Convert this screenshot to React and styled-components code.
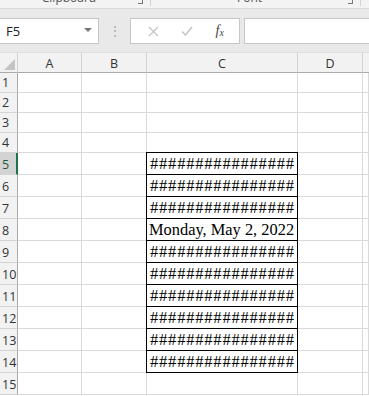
import React from "react";
import styled, { createGlobalStyle } from "styled-components";

const GlobalStyle = createGlobalStyle`
  body {
    margin: 0;
    background: #ffffff;
    overflow: hidden;
    font-family: "Open Sans", "Noto Sans", sans-serif;
  }
`;

const columns = [
  { name: "A", width: 64 },
  { name: "B", width: 65 },
  { name: "C", width: 151 },
  { name: "D", width: 65 },
];

const rows = [];
for (let i = 1; i <= 15; i++) {
  let value = null;
  if (i >= 5 && i <= 14) value = i === 8 ? "Monday, May 2, 2022" : "################";
  rows.push({ num: i, height: i <= 4 ? 20 : 22, value });
}

function App() {
  return (
    <>
      <GlobalStyle />
      <Window>
        <Ribbon>
          <RibbonGroup $width={150}>
            <GroupLabel>Clipboard</GroupLabel>
            <Launcher />
          </RibbonGroup>
          <RibbonGroup $width={209}>
            <GroupLabel>Font</GroupLabel>
            <Launcher />
          </RibbonGroup>
        </Ribbon>

        <FormulaBar>
          <NameBox>
            <span>F5</span>
            <Caret />
          </NameBox>
          <Grip>⋮</Grip>
          <FxButtons>
            <svg width="11" height="11" viewBox="0 0 11 11">
              <path d="M1 1 L10 10 M10 1 L1 10" stroke="#c4c4c4" strokeWidth="1.3" fill="none" />
            </svg>
            <svg width="12" height="10" viewBox="0 0 12 10">
              <path d="M1 5.5 L4.5 9 L11 1" stroke="#c4c4c4" strokeWidth="1.5" fill="none" />
            </svg>
            <FxText>
              f<sub>x</sub>
            </FxText>
          </FxButtons>
          <FormulaInput />
        </FormulaBar>

        <Sheet>
          <Corner>
            <CornerMark />
          </Corner>
          {columns.map(c => (
            <ColHeader key={c.name}>{c.name}</ColHeader>
          ))}
          <ColHeader $last />

          {rows.map(r => (
            <React.Fragment key={`row_${r.num}`}>
              <RowHeader $active={r.num === 5} $height={r.height}>
                {r.num}
              </RowHeader>
              <Cell />
              <Cell />
              <Cell $boxed={!!r.value} $first={r.num === 5}>
                {r.value && <CellText $hash={r.value.startsWith("#")}>{r.value}</CellText>}
              </Cell>
              <Cell />
              <Cell />
            </React.Fragment>
          ))}
        </Sheet>
      </Window>
    </>
  );
}

const Window = styled.div`
  width: 369px;
  height: 396px;
  overflow: hidden;
  background: #ffffff;
`;

const Ribbon = styled.div`
  height: 8px;
  display: flex;
  background: #f3f3f3;
  border-bottom: 1px solid #d8d8d8;
  overflow: hidden;
`;

const RibbonGroup = styled.div`
  width: ${props => props.$width}px;
  flex: none;
  position: relative;
  display: flex;
  justify-content: center;
  border-right: 1px solid #d2d2d2;
  height: 6px;
`;

const GroupLabel = styled.div`
  font-family: "Open Sans", "Noto Sans", sans-serif;
  font-size: 12px;
  line-height: 12px;
  color: #555;
  margin-top: -8px;
  margin-left: -12px;
`;

const Launcher = styled.div`
  position: absolute;
  right: 7px;
  top: 0;
  width: 4px;
  height: 3px;
  border-right: 1px solid #777;
  border-bottom: 1px solid #777;
`;

const FormulaBar = styled.div`
  height: 43px;
  box-sizing: border-box;
  padding: 9px 0 8px;
  display: flex;
  background: #e9e9e9;
`;

const Box = styled.div`
  box-sizing: border-box;
  height: 26px;
  background: #ffffff;
  border: 1px solid #c6c6c6;
`;

const NameBox = styled(Box)`
  width: 100px;
  margin-left: -1px;
  display: flex;
  align-items: center;
  justify-content: space-between;
  padding: 0 6px 0 6px;
  font-size: 13px;
  color: #222;
`;

const Caret = styled.div`
  width: 0;
  height: 0;
  border-left: 4px solid transparent;
  border-right: 4px solid transparent;
  border-top: 4px solid #777;
  margin-top: -2px;
`;

const Grip = styled.div`
  width: 31px;
  flex: none;
  text-align: center;
  color: #b0b0b0;
  font-size: 14px;
  line-height: 26px;
`;

const FxButtons = styled(Box)`
  width: 110px;
  display: flex;
  align-items: center;
  justify-content: space-around;
  padding: 0 4px 0 6px;
`;

const FxText = styled.span`
  font-family: "Liberation Serif", "DejaVu Serif", serif;
  font-style: italic;
  font-size: 14px;
  color: #444;
  sub {
    font-size: 10px;
    vertical-align: -1px;
  }
`;

const FormulaInput = styled(Box)`
  flex: 1;
  margin-left: 4px;
  margin-right: -2px;
`;

const Sheet = styled.div`
  display: grid;
  grid-template-columns: 18px 64px 65px 151px 65px 1fr;
  grid-auto-rows: auto;
  background: #ffffff;
`;

const Corner = styled.div`
  height: 21px;
  box-sizing: border-box;
  background: #f2f2f2;
  border-right: 1px solid #d4d4d4;
  border-bottom: 1px solid #ababab;
  position: relative;
  border-top: 1px solid #dedede;
`;

const CornerMark = styled.div`
  position: absolute;
  right: 2px;
  bottom: 2px;
  width: 0;
  height: 0;
  border-left: 11px solid transparent;
  border-bottom: 11px solid #c4c4c4;
`;

const ColHeader = styled.div`
  height: 21px;
  box-sizing: border-box;
  background: #f2f2f2;
  border-top: 1px solid #dedede;
  border-right: ${props => (props.$last ? "none" : "1px solid #d4d4d4")};
  border-bottom: 1px solid #ababab;
  display: flex;
  align-items: center;
  justify-content: center;
  font-size: 12.5px;
  color: #333;
  padding-top: 1px;
`;

const RowHeader = styled.div`
  height: ${props => props.$height}px;
  box-sizing: border-box;
  background: ${props => (props.$active ? "#d3d3d3" : "#f2f2f2")};
  border-right: ${props => (props.$active ? "2px solid #217346" : "1px solid #ababab")};
  border-bottom: 1px solid #d4d4d4;
  font-size: 12.5px;
  color: ${props => (props.$active ? "#1e5c3a" : "#333")};
  display: flex;
  align-items: flex-end;
  padding: 0 0 1px 2px;
`;

const Cell = styled.div`
  box-sizing: border-box;
  position: relative;
  border-right: 1px solid ${props => (props.$boxed ? "#000" : "#dadada")};
  border-bottom: 1px solid ${props => (props.$boxed ? "#000" : "#dadada")};
  box-shadow: ${props =>
    props.$boxed
      ? props.$first
        ? "-1px 0 0 0 #000, 0 -1px 0 0 #000, -1px -1px 0 0 #000"
        : "-1px 0 0 0 #000"
      : "none"};
  z-index: ${props => (props.$boxed ? 1 : 0)};
  display: flex;
  align-items: flex-end;
  overflow: hidden;
`;

const CellText = styled.span`
  font-family: "Liberation Serif", "Times New Roman", serif;
  font-size: ${props => (props.$hash ? "16.5px" : "16.4px")};
  line-height: 18px;
  color: #000;
  white-space: nowrap;
  padding-left: ${props => (props.$hash ? "3px" : "2px")};
  letter-spacing: ${props => (props.$hash ? "0.8px" : "0")};
  padding-bottom: 1px;
`;

export default App;
